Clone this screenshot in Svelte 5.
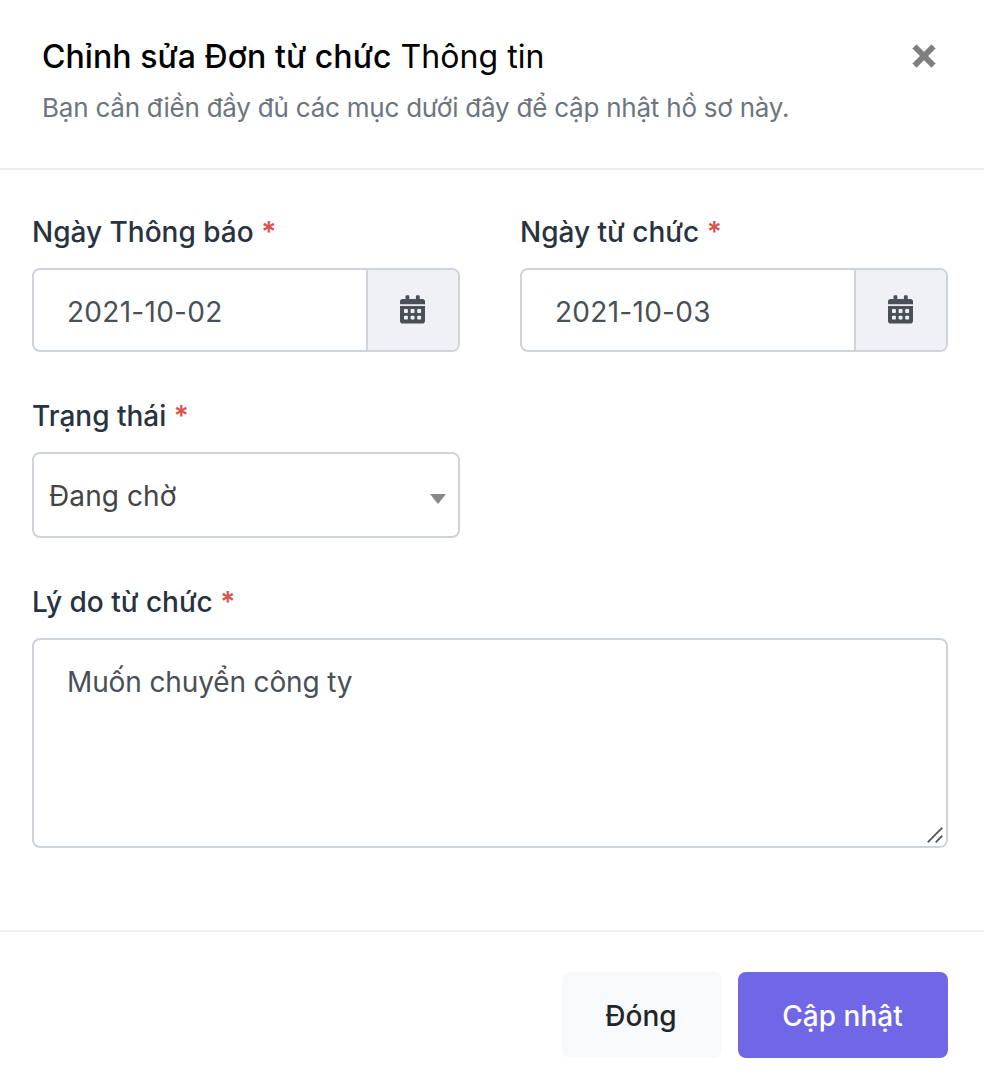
<script>
  let dates = $state([
    { id: 'notice', label: 'Ngày Thông báo', value: '2021-10-02' },
    { id: 'resign', label: 'Ngày từ chức', value: '2021-10-03' }
  ]);
  let reason = $state('Muốn chuyển công ty');
</script>

<div class="modal">
  <header>
    <div class="heading">
      <h1><strong>Chỉnh sửa Đơn từ chức</strong> <span>Thông tin</span></h1>
      <p>Bạn cần điền đầy đủ các mục dưới đây để cập nhật hồ sơ này.</p>
    </div>
    <button class="close" type="button">
      <svg width="24" height="24" viewBox="0 0 24 24"><path d="M4.5 0.6 12 8.1 19.5 0.6 23.4 4.5 15.9 12 23.4 19.5 19.5 23.4 12 15.9 4.5 23.4 0.6 19.5 8.1 12 0.6 4.5Z" fill="#7f7f7f" stroke="#7f7f7f" stroke-width="0.4" stroke-linejoin="round" /></svg>
    </button>
  </header>

  <main>
    <div class="row">
      {#each dates as d (d.id)}
        <div class="field">
          <label for={d.id}>{d.label} <em>*</em></label>
          <div class="group">
            <input id={d.id} type="text" bind:value={d.value} />
            <span class="addon">
              <svg width="25" height="29" viewBox="0 0 25 29">
                <path fill="#495057" fill-rule="evenodd" d="M5.500 4V1.200Q5.500 .3 6.400 .3H8.400Q9.300 .3 9.300 1.200V4H15.900V1.200Q15.900 .3 16.800 .3H18.800Q19.700 .3 19.700 1.200V4H22.200Q25 4 25 6.800V9.200H0V6.800Q0 4 2.800 4ZM0 11H25V25.700Q25 28.500 22.200 28.500H2.800Q0 28.500 0 25.700ZM4.800 14.100Q4 14.100 4 14.900V17.200Q4 18 4.800 18H7.100Q7.900 18 7.900 17.200V14.900Q7.900 14.100 7.100 14.100ZM11.400 14.100Q10.600 14.100 10.600 14.900V17.200Q10.600 18 11.400 18H13.700Q14.500 18 14.500 17.200V14.900Q14.500 14.100 13.700 14.100ZM18 14.100Q17.200 14.100 17.200 14.900V17.200Q17.200 18 18 18H20.300Q21.100 18 21.100 17.200V14.900Q21.100 14.100 20.300 14.100ZM4.800 20.700Q4 20.700 4 21.500V23.800Q4 24.600 4.800 24.600H7.100Q7.900 24.600 7.900 23.800V21.500Q7.900 20.700 7.100 20.700ZM11.400 20.700Q10.600 20.700 10.600 21.500V23.800Q10.600 24.600 11.400 24.600H13.700Q14.500 24.600 14.500 23.800V21.500Q14.500 20.700 13.700 20.700ZM18 20.700Q17.200 20.700 17.200 21.500V23.800Q17.200 24.600 18 24.600H20.300Q21.100 24.600 21.100 23.800V21.500Q21.100 20.700 20.300 20.700Z" />
              </svg>
            </span>
          </div>
        </div>
      {/each}
    </div>

    <div class="row">
      <div class="field">
        <span class="label">Trạng thái <em>*</em></span>
        <div class="select">
          <span>Đang chờ</span>
          <svg width="16" height="10" viewBox="0 0 16 10"><path d="M0 0H16L8 10Z" fill="#888" /></svg>
        </div>
      </div>
    </div>

    <div class="field">
      <label for="reason">Lý do từ chức <em>*</em></label>
      <div class="area">
        <textarea id="reason" bind:value={reason}></textarea>
        <svg class="grip" width="16" height="16" viewBox="0 0 16 16"><path d="M0.700 15.300 15.300 0.700M8.700 15.300 15.300 8.700" stroke="#555" stroke-width="1.800" /></svg>
      </div>
    </div>
  </main>

  <footer>
    <button class="btn light" type="button">Đóng</button>
    <button class="btn primary" type="button">Cập nhật</button>
  </footer>
</div>

<style>
  :global(body) { margin: 0; background: #fff; }
  .modal, .modal * { box-sizing: border-box; }
  .modal {
    width: 984px;
    height: 1092px;
    overflow: hidden;
    display: flex;
    flex-direction: column;
    background: #fff;
    font-family: Inter, sans-serif;
    font-size: 28px;
  }
  button, input, textarea { font: inherit; margin: 0; border: 0; }
  header {
    height: 170px;
    flex: none;
    padding: 33px 48px 0 42px;
    display: flex;
    justify-content: space-between;
    border-bottom: 2px solid #efefef;
  }
  h1 { margin: 0; font-size: 32px; line-height: 48px; font-weight: 400; letter-spacing: 0.06px; color: #000; white-space: nowrap; }
  h1 strong { font-weight: 500; }
  header p { margin: 7px 0 0; font-size: 26px; line-height: 40px; letter-spacing: -0.225px; color: #6c757d; white-space: nowrap; }
  .close { display: flex; align-self: flex-start; padding: 0; margin-top: 11px; background: none; }
  main { height: 762px; flex: none; padding: 41px 36px 0 32px; border-bottom: 2px solid #efefef; }
  .row { display: grid; grid-template-columns: 428px 428px; column-gap: 60px; }
  .field { display: flex; flex-direction: column; }
  label, .label {
    display: block;
    height: 42px;
    line-height: 42px;
    margin-bottom: 15px;
    font-weight: 500;
    color: #293240;
    white-space: nowrap;
  }
  em { font-style: normal; font-weight: 600; color: #d9534f; }
  .group, .select, .area { border: 2px solid #ced4da; border-radius: 8px; background: #fff; overflow: hidden; }
  .group { display: flex; height: 84px; margin-bottom: 43px; }
  input { flex: 1; min-width: 0; padding: 4px 33px 0; letter-spacing: 0.28px; color: #495057; background: none; outline: 0; }
  .addon {
    width: 92px;
    padding-right: 1px;
    display: flex;
    align-items: center;
    justify-content: center;
    background: #eff1f7;
    border-left: 2px solid #ced4da;
  }
  .addon svg { margin-bottom: 1px; }
  .select {
    height: 86px;
    margin-bottom: 43px;
    padding: 2px 12px 0 15px;
    display: flex;
    align-items: center;
    justify-content: space-between;
    letter-spacing: 0.1px;
    color: #444;
  }
  .select svg { margin-top: 5px; }
  .area { position: relative; height: 210px; }
  textarea {
    display: block;
    width: 100%;
    height: 100%;
    padding: 21px 33px;
    line-height: 42px;
    letter-spacing: -0.13px;
    color: #495057;
    resize: none;
    outline: 0;
    background: none;
  }
  .grip { position: absolute; right: 3px; bottom: 3px; }
  footer { flex: 1; padding: 40px 36px 0 0; display: flex; justify-content: flex-end; align-items: flex-start; gap: 16px; }
  .btn { height: 86px; padding: 2px 2px 0 0; border-radius: 8px; font-weight: 500; }
  .light { width: 160px; background: #f8f9fb; color: #212529; }
  .primary { width: 210px; padding-right: 1px; background: #7067e6; color: #fff; }
</style>
